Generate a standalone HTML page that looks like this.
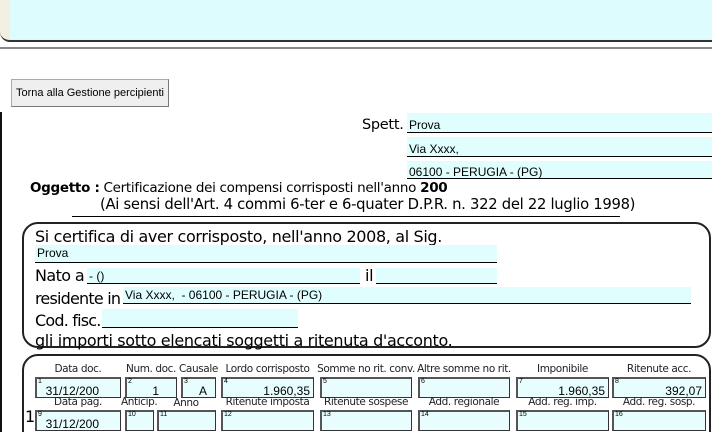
<!DOCTYPE html>
<html style="height:432px;overflow:hidden"><head><meta charset="utf-8"><style>
*{margin:0;padding:0;box-sizing:border-box}
body{width:712px;height:432px;overflow:hidden;background:#fff;position:relative;font-family:"DejaVu Sans","Liberation Sans",sans-serif;color:#000}
.a{position:absolute;white-space:nowrap}
.t{font-size:13.5px;letter-spacing:-0.3px}
.u{font-size:16px;letter-spacing:-0.35px}
.f{position:absolute;background:#e0fefe;border-bottom:1px solid #000;font-family:"Liberation Sans",sans-serif;font-size:12px;padding-left:2px;white-space:nowrap}
.box{position:absolute;border:2px solid #222;border-radius:16px}
.lb{position:absolute;font-size:10.5px;font-family:"DejaVu Sans",sans-serif;color:#222;white-space:nowrap;text-align:center;letter-spacing:-0.4px}
.in{position:absolute;height:21px;background:#e8fefe;border:1px solid #333;border-top:2px solid #555;border-left:2px solid #555;font-family:"Liberation Sans",sans-serif;font-size:12px;text-align:right;padding:5px 3px 0 0}
.in i{position:absolute;left:1px;top:-1px;font-style:normal;font-size:7px}
.in b{font-weight:normal}
</style></head><body>
<div class="a" style="left:0;top:0;width:712px;height:42px;background:#f3efe2;border-bottom:2px solid #333;border-bottom-left-radius:10px"></div>
<div class="a" style="left:10px;top:0;width:702px;height:39px;background:#dcfcfe"></div>
<div class="a" style="left:0;top:47px;width:712px;height:2px;background:#888"></div>
<div class="a" style="left:11px;top:79px;width:158px;height:28px;background:#efefef;border:1px solid #aaa;border-right-color:#777;border-bottom-color:#777;font-family:'Liberation Sans',sans-serif;font-size:11px;text-align:center;line-height:26px">Torna alla Gestione percipienti</div>
<div class="a" style="left:0;top:112px;width:2px;height:320px;background:#111"></div>

<div class="a" style="left:362px;top:117px;font-size:14.5px;letter-spacing:-0.3px">Spett.</div>
<div class="f" style="left:407px;top:113px;width:305px;height:20px;line-height:24px">Prova</div>
<div class="f" style="left:407px;top:137px;width:305px;height:20px;line-height:24px">Via Xxxx,</div>
<div class="f" style="left:407px;top:161px;width:305px;height:18px;line-height:22px">06100 - PERUGIA - (PG)</div>

<div class="a t" style="left:30px;top:180px"><b>Oggetto :</b> Certificazione dei compensi corrisposti nell'anno <b>200</b></div>
<div class="a" style="left:100px;top:196px;font-size:14.8px;letter-spacing:-0.3px">(Ai sensi dell'Art. 4 commi 6-ter e 6-quater D.P.R. n. 322 del 22 luglio 1998)</div>
<div class="a" style="left:72px;top:216px;width:548px;height:1px;background:#000"></div>

<div class="box" style="left:22px;top:222px;width:689px;height:126px"></div>
<div class="a u" style="left:35px;top:227px">Si certifica di aver corrisposto, nell'anno 2008, al Sig.</div>
<div class="f" style="left:35px;top:245px;width:462px;height:18px;line-height:16px">Prova</div>
<div class="a u" style="left:35px;top:266px;letter-spacing:-0.6px">Nato a</div>
<div class="f" style="left:87px;top:268px;width:273px;height:16px;line-height:16px">- ()</div>
<div class="a u" style="left:365px;top:266px">il</div>
<div class="f" style="left:376px;top:268px;width:121px;height:16px"></div>
<div class="a u" style="left:35px;top:289px;letter-spacing:-0.8px">residente in</div>
<div class="f" style="left:123px;top:287px;width:568px;height:17px;line-height:16px">Via Xxxx,&nbsp; - 06100 - PERUGIA - (PG)</div>
<div class="a u" style="left:35px;top:311px;letter-spacing:-0.8px">Cod. fisc.</div>
<div class="f" style="left:102px;top:309px;width:196px;height:19px"></div>
<div class="a u" style="left:35px;top:331px">gli importi sotto elencati soggetti a ritenuta d'acconto.</div>

<div class="box" style="left:22px;top:354px;width:689px;height:100px"></div>
<div class="lb" style="left:35px;top:363px;width:86px">Data doc.</div>
<div class="lb" style="left:123px;top:363px;width:56px">Num. doc.</div>
<div class="lb" style="left:179px;top:363px;width:38px">Causale</div>
<div class="lb" style="left:221px;top:363px;width:93px">Lordo corrisposto</div>
<div class="lb" style="left:314px;top:363px;width:104px">Somme no rit. conv.</div>
<div class="lb" style="left:414px;top:363px;width:100px">Altre somme no rit.</div>
<div class="lb" style="left:516px;top:363px;width:93px">Imponibile</div>
<div class="lb" style="left:612px;top:363px;width:94px">Ritenute acc.</div>
<div class="in" style="left:35px;top:377px;width:86px"><i>1</i><b style="padding-right:18px">31/12/200</b></div>
<div class="in" style="left:125px;top:377px;width:52px"><i>2</i><b style="padding-right:14px">1</b></div>
<div class="in" style="left:181px;top:377px;width:35px"><i>3</i><b style="padding-right:5px">A</b></div>
<div class="in" style="left:221px;top:377px;width:93px"><i>4</i>1.960,35</div>
<div class="in" style="left:320px;top:377px;width:92px"><i>5</i></div>
<div class="in" style="left:418px;top:377px;width:92px"><i>6</i></div>
<div class="in" style="left:516px;top:377px;width:93px"><i>7</i>1.960,35</div>
<div class="in" style="left:612px;top:377px;width:94px"><i>8</i>392,07</div>

<div class="lb" style="left:35px;top:396px;width:86px">Data pag.</div>
<div class="lb" style="left:121px;top:396px;width:36px">Anticip.</div>
<div class="lb" style="left:157px;top:397px;width:58px">Anno</div>
<div class="lb" style="left:221px;top:396px;width:93px">Ritenute imposta</div>
<div class="lb" style="left:320px;top:396px;width:92px">Ritenute sospese</div>
<div class="lb" style="left:418px;top:396px;width:92px">Add. regionale</div>
<div class="lb" style="left:516px;top:396px;width:93px">Add. reg. imp.</div>
<div class="lb" style="left:612px;top:396px;width:94px">Add. reg. sosp.</div>
<div class="a" style="left:25px;top:407px;font-size:16px">1</div>
<div class="in" style="left:35px;top:410px;width:86px"><i>9</i><b style="padding-right:18px">31/12/200</b></div>
<div class="in" style="left:125px;top:410px;width:29px"><i>10</i></div>
<div class="in" style="left:157px;top:410px;width:59px"><i>11</i></div>
<div class="in" style="left:221px;top:410px;width:93px"><i>12</i></div>
<div class="in" style="left:320px;top:410px;width:92px"><i>13</i></div>
<div class="in" style="left:418px;top:410px;width:92px"><i>14</i></div>
<div class="in" style="left:516px;top:410px;width:93px"><i>15</i></div>
<div class="in" style="left:612px;top:410px;width:94px"><i>16</i></div>
</body></html>
